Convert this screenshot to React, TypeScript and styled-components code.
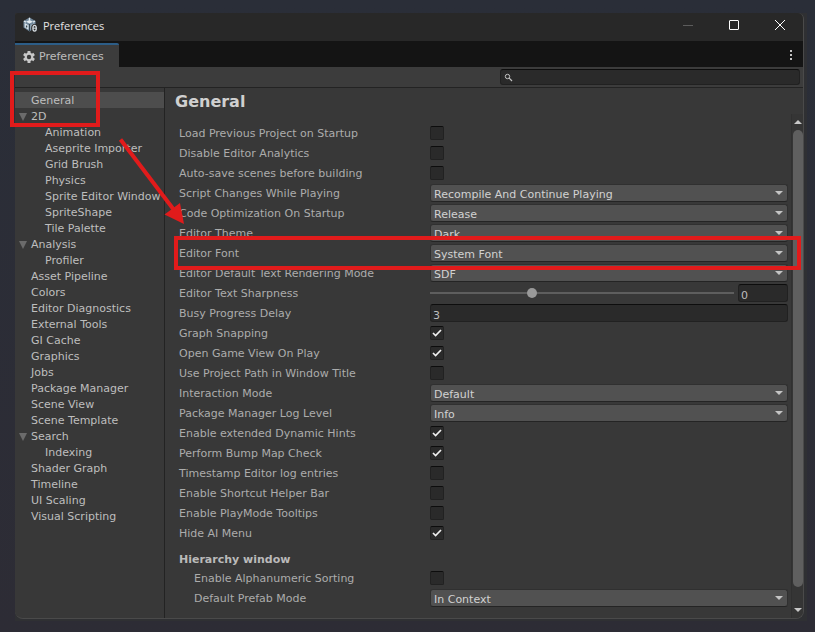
import React from "react";
import styled, { createGlobalStyle, css } from "styled-components";

const uiFont = '"DejaVu Sans", Verdana, sans-serif';

const GlobalStyle = createGlobalStyle`
  *, *::before, *::after { box-sizing: border-box; }
  body { margin: 0; background: #2b2d36; color: #bebebe; font: 11px/16px ${uiFont}; }
  button, input, select { font: inherit; color: inherit; margin: 0; }
  h1, h2, ul { margin: 0; padding: 0; }
`;

const Desktop = styled.div`
  position: relative;
  display: flex;
  min-height: 100vh;
  padding: 13px 8px 11px 15px;
  background: linear-gradient(#2a2e38, #2d2c35);
`;

const Backdrop = styled.div`
  display: flex;
  flex: 1;
  min-width: 0;
  padding: 0 3px 2px 0;
  background: #2f3033;
`;

const Window = styled.div`
  display: flex;
  flex-direction: column;
  flex: 1;
  min-width: 0;
  overflow: hidden;
  background: #383838;
  border: solid #4a4a4a;
  border-width: 0 1px 1px 0;
  border-radius: 3px 6px 8px 8px;
`;

const TitleBar = styled.header`
  display: flex;
  align-items: center;
  height: 28px;
  padding: 0 0 4px 8px;
  background: #282828;
`;

const Title = styled.span`
  flex: 1;
  margin-left: 5px;
  padding-top: 2px;
  font: 11px/16px "Open Sans", "Noto Sans", sans-serif;
  color: #e4e4e4;
`;

const CaptionButton = styled.button<{ $dim?: boolean }>`
  display: grid;
  place-items: center;
  width: 46px;
  height: 24px;
  padding: 0;
  border: 0;
  background: none;
  color: ${(p) => (p.$dim ? "#5c5c5c" : "#ffffff")};
`;

const TabBar = styled.div`
  display: flex;
  align-items: flex-end;
  justify-content: space-between;
  height: 26px;
  background: #141414;
`;

const Tab = styled.button`
  display: flex;
  align-items: center;
  gap: 4px;
  height: 24px;
  padding: 1px 15px 0 8px;
  border: 0;
  border-top: 2px solid #2c5d87;
  border-radius: 0 2px 0 0;
  background: #3c3c3c;
  color: #bdbdbd;
`;

const MenuButton = styled.button`
  display: grid;
  place-items: center;
  width: 24px;
  height: 26px;
  padding: 2px 0 0;
  border: 0;
  background: none;
  color: #c4c4c4;
`;

const Toolbar = styled.div`
  display: flex;
  justify-content: flex-end;
  height: 21px;
  padding: 2px 3px;
  background: #3c3c3c;
  border-bottom: 1px solid #232323;
`;

const field = css`
  background: #2a2a2a;
  border: 1px solid #212121;
  border-top-color: #0d0d0d;
  border-radius: 3px;
`;

const SearchBox = styled.label`
  ${field}
  display: flex;
  align-items: center;
  width: 300px;
  height: 16px;
  padding-left: 3px;
  color: #c4c4c4;
  input {
    flex: 1;
    min-width: 0;
    height: 14px;
    padding: 0 4px;
    border: 0;
    outline: 0;
    background: none;
  }
`;

const Body = styled.div`
  display: flex;
  flex: 1;
  min-height: 0;
`;

const Sidebar = styled.nav`
  flex: 0 0 150px;
  padding-top: 4px;
  border-right: 1px solid #232323;
  ul { list-style: none; }
`;

const NavItem = styled.a<{ $level: number; $selected?: boolean }>`
  display: flex;
  align-items: center;
  height: 16px;
  padding-top: 2px;
  padding-left: ${(p) => (p.$level ? 30 : 4)}px;
  background: ${(p) => (p.$selected ? "#4d4d4d" : "transparent")};
  color: #bebebe;
  text-decoration: none;
  white-space: nowrap;
`;

const Disclosure = styled.span`
  display: flex;
  width: 12px;
  height: 16px;
  align-items: center;
  color: #6b6b6b;
`;

const Main = styled.main`
  flex: 1;
  min-width: 0;
  padding-left: 10px;
`;

const Heading = styled.h1`
  height: 26px;
  padding-top: 2px;
  font-size: 16px;
  line-height: 24px;
  color: #d0d0d0;
`;

const ScrollArea = styled.div`
  display: flex;
  min-height: 504px;
`;

const Settings = styled.div`
  flex: 1;
  min-width: 0;
  padding: 9px 3px 0 4px;
`;

const Row = styled.div<{ $indent?: boolean }>`
  display: flex;
  align-items: center;
  height: 20px;
  > label {
    flex: 0 0 251px;
    padding-top: 2px;
    padding-left: ${(p) => (p.$indent ? 15 : 0)}px;
    color: #acacac;
    white-space: nowrap;
  }
`;

const SectionTitle = styled.h2`
  height: 25px;
  padding-top: 9px;
  font-size: 11px;
  line-height: 16px;
  color: #bababa;
`;

const CheckWrap = styled.span`
  display: grid;
  width: 14px;
  height: 14px;
  > * { grid-area: 1 / 1; }
  svg { pointer-events: none; }
`;

const CheckInput = styled.input`
  ${field}
  appearance: none;
  width: 14px;
  height: 14px;
  border-radius: 2px;
`;

const SelectWrap = styled.span`
  display: grid;
  align-items: center;
  flex: 1;
  min-width: 0;
  > * { grid-area: 1 / 1; }
  svg { justify-self: end; margin-right: 5px; pointer-events: none; color: #c4c4c4; }
`;

const SelectInput = styled.select`
  appearance: none;
  width: 100%;
  height: 18px;
  padding: 2px 16px 0 3px;
  border: 1px solid #303030;
  border-bottom-color: #242424;
  border-radius: 3px;
  background: #515151;
  color: #d2d2d2;
`;

const TextInput = styled.input<{ $narrow?: boolean }>`
  ${field}
  flex: ${(p) => (p.$narrow ? "0 0 50px" : "1")};
  min-width: 0;
  width: 50px;
  height: 18px;
  padding: 4px 2px 0;
  color: #bdbdbd;
`;

const Slider = styled.input`
  appearance: none;
  flex: 1;
  min-width: 0;
  height: 10px;
  margin-right: 4px;
  background: linear-gradient(#5e5e5e, #5e5e5e) center / 100% 2px no-repeat;
  &::-webkit-slider-thumb {
    appearance: none;
    width: 10px;
    height: 10px;
    border-radius: 50%;
    background: #999999;
  }
`;

const ScrollTrack = styled.div`
  display: flex;
  flex-direction: column;
  align-items: center;
  width: 12px;
  background: #353535;
  border-left: 1px solid #303030;
  color: #c8c8c8;
`;

const ScrollButton = styled.button`
  display: grid;
  place-items: center;
  width: 11px;
  height: 16px;
  padding: 0;
  border: 0;
  background: none;
  color: inherit;
`;

const ScrollThumb = styled.div`
  flex: 1;
  width: 10px;
  margin-bottom: 15px;
  border-radius: 5px;
  background: #5f5f5f;
`;

const NavCallout = styled.div`
  position: absolute;
  left: 10px;
  top: 71px;
  width: 90px;
  height: 56px;
  border: 4px solid #e11b1b;
  pointer-events: none;
`;

const FontCallout = styled.div`
  position: absolute;
  left: 174px;
  right: 14px;
  top: 236px;
  height: 34px;
  border: 4px solid #e11b1b;
  pointer-events: none;
`;

const ArrowCallout = styled.svg`
  position: absolute;
  left: 116px;
  top: 136px;
  pointer-events: none;
`;

const Triangle = ({ up }: { up?: boolean }) => (
  <svg width="8" height="4" viewBox="0 0 8 4" aria-hidden="true">
    <path d={up ? "M0 4 4 0l4 4z" : "M0 0h8L4 4z"} fill="currentColor" />
  </svg>
);

const Check = ({ id, checked }: { id: string; checked: boolean }) => {
  const [on, setOn] = React.useState(checked);
  return (
    <CheckWrap>
      <CheckInput id={id} type="checkbox" checked={on} onChange={() => setOn(!on)} />
      {on && (
        <svg width="14" height="14" viewBox="0 0 14 14" aria-hidden="true">
          <path d="M3 7 5.600 9.500 11 4" fill="none" stroke="#eeeeee" strokeWidth="1.7" />
        </svg>
      )}
    </CheckWrap>
  );
};

const Select = ({ id, value }: { id: string; value: string }) => (
  <SelectWrap>
    <SelectInput id={id} defaultValue={value}>
      <option>{value}</option>
    </SelectInput>
    <Triangle />
  </SelectWrap>
);

type Setting = { label: string; value: boolean | string; kind?: "slider" | "text"; indent?: boolean };

const general: Setting[] = [
  { label: "Load Previous Project on Startup", value: false },
  { label: "Disable Editor Analytics", value: false },
  { label: "Auto-save scenes before building", value: false },
  { label: "Script Changes While Playing", value: "Recompile And Continue Playing" },
  { label: "Code Optimization On Startup", value: "Release" },
  { label: "Editor Theme", value: "Dark" },
  { label: "Editor Font", value: "System Font" },
  { label: "Editor Default Text Rendering Mode", value: "SDF" },
  { label: "Editor Text Sharpness", value: "0", kind: "slider" },
  { label: "Busy Progress Delay", value: "3", kind: "text" },
  { label: "Graph Snapping", value: true },
  { label: "Open Game View On Play", value: true },
  { label: "Use Project Path in Window Title", value: false },
  { label: "Interaction Mode", value: "Default" },
  { label: "Package Manager Log Level", value: "Info" },
  { label: "Enable extended Dynamic Hints", value: true },
  { label: "Perform Bump Map Check", value: true },
  { label: "Timestamp Editor log entries", value: false },
  { label: "Enable Shortcut Helper Bar", value: false },
  { label: "Enable PlayMode Tooltips", value: false },
  { label: "Hide AI Menu", value: true },
];

const hierarchy: Setting[] = [
  { label: "Enable Alphanumeric Sorting", value: false, indent: true },
  { label: "Default Prefab Mode", value: "In Context", indent: true },
];

const nav: { label: string; level?: number; open?: boolean }[] = [
  { label: "General" },
  { label: "2D", open: true },
  { label: "Animation", level: 1 },
  { label: "Aseprite Importer", level: 1 },
  { label: "Grid Brush", level: 1 },
  { label: "Physics", level: 1 },
  { label: "Sprite Editor Window", level: 1 },
  { label: "SpriteShape", level: 1 },
  { label: "Tile Palette", level: 1 },
  { label: "Analysis", open: true },
  { label: "Profiler", level: 1 },
  { label: "Asset Pipeline" },
  { label: "Colors" },
  { label: "Editor Diagnostics" },
  { label: "External Tools" },
  { label: "GI Cache" },
  { label: "Graphics" },
  { label: "Jobs" },
  { label: "Package Manager" },
  { label: "Scene View" },
  { label: "Scene Template" },
  { label: "Search", open: true },
  { label: "Indexing", level: 1 },
  { label: "Shader Graph" },
  { label: "Timeline" },
  { label: "UI Scaling" },
  { label: "Visual Scripting" },
];

const SettingRow = ({ label, value, kind, indent }: Setting) => {
  const id = label.toLowerCase().replace(/\s+/g, "-");
  return (
    <Row $indent={indent}>
      <label htmlFor={id}>{label}</label>
      {typeof value === "boolean" ? (
        <Check id={id} checked={value} />
      ) : kind === "slider" ? (
        <>
          <Slider id={id} type="range" min={0} max={100} defaultValue={33} />
          <TextInput $narrow aria-label={`${label} value`} defaultValue={value} />
        </>
      ) : kind === "text" ? (
        <TextInput id={id} defaultValue={value} />
      ) : (
        <Select id={id} value={value} />
      )}
    </Row>
  );
};

const AppLogo = () => (
  <svg width="15" height="16" viewBox="0 0 15 16" aria-hidden="true">
    <path d="M6.5 0.5 12.5 4v6.500l-6 4-6-4V4z" fill="#71889b" />
    <path d="M6.500 3 10 4.800 6.500 6.600 3 4.800z" fill="#e3ebf1" />
    <path d="M6.500 0.800V3M1 4.200l2 1M12 4.200l-2 1" fill="none" stroke="#dbe5ec" strokeWidth="1.300" />
    <path d="M1.700 6v4.200l3.800 2.600V8.200z" fill="#dbe5ec" />
    <path d="M3.600 8.400v2" stroke="#34444f" strokeWidth="1.400" />
    <path d="M7.500 8.200 11 6.200v4L7.500 12.800z" fill="#a9bac7" />
    <path d="M6.500 7v7" stroke="#34444f" strokeWidth="1" />
    <ellipse cx="11.5" cy="11.3" rx="3.300" ry="4.200" fill="#282828" />
    <ellipse cx="11.600" cy="11.300" rx="1.700" ry="2.900" fill="none" stroke="#d7dee3" strokeWidth="1.300" />
    <path d="M10 11.200h3.200" stroke="#d7dee3" strokeWidth="1" />
  </svg>
);

const Gear = () => (
  <svg width="12" height="12" viewBox="0 0 12 12" aria-hidden="true">
    <g fill="#c8c8c8">
      {[0, 60, 120].map((a) => (
        <rect key={a} x="4.500" y="0" width="3" height="12" rx="0.500" transform={`rotate(${a} 6 6)`} />
      ))}
      <circle cx="6" cy="6" r="4.400" />
    </g>
    <circle cx="6" cy="6" r="2.200" fill="#3c3c3c" />
  </svg>
);

export default function App() {
  return (
    <>
      <GlobalStyle />
      <Desktop>
        <Backdrop>
          <Window>
            <TitleBar>
              <AppLogo />
              <Title>Preferences</Title>
              <CaptionButton $dim aria-label="Minimize">
                <svg width="10" height="10"><path d="M0 5.500h10" stroke="currentColor" /></svg>
              </CaptionButton>
              <CaptionButton aria-label="Maximize">
                <svg width="10" height="10"><rect x="0.500" y="0.500" width="9" height="9" rx="0.500" fill="none" stroke="currentColor" /></svg>
              </CaptionButton>
              <CaptionButton aria-label="Close">
                <svg width="10" height="10"><path d="M0 0l10 10M10 0 0 10" stroke="currentColor" /></svg>
              </CaptionButton>
            </TitleBar>
            <TabBar>
              <Tab><Gear />Preferences</Tab>
              <MenuButton aria-label="Tab options">
                <svg width="2" height="10"><path d="M0 0h2v2H0zM0 4h2v2H0zM0 8h2v2H0z" fill="currentColor" /></svg>
              </MenuButton>
            </TabBar>
            <Toolbar>
              <SearchBox>
                <svg width="9" height="9" viewBox="0 0 9 9" aria-hidden="true">
                  <circle cx="3.500" cy="3.500" r="2.200" fill="none" stroke="currentColor" strokeWidth="1" />
                  <path d="M5.200 5.200 8 8" stroke="currentColor" strokeWidth="1.200" />
                </svg>
                <input type="text" aria-label="Search preferences" />
              </SearchBox>
            </Toolbar>
            <Body>
              <Sidebar>
                <ul>
                  {nav.map((item, i) => (
                    <li key={item.label}>
                      <NavItem href="#" $level={item.level ?? 0} $selected={i === 0}>
                        {!item.level && <Disclosure>{item.open && <svg width="8" height="8" aria-hidden="true"><path d="M0 0h8L4 8z" fill="currentColor" /></svg>}</Disclosure>}
                        {item.label}
                      </NavItem>
                    </li>
                  ))}
                </ul>
              </Sidebar>
              <Main>
                <Heading>General</Heading>
                <ScrollArea>
                  <Settings>
                    {general.map((s) => <SettingRow key={s.label} {...s} />)}
                    <SectionTitle>Hierarchy window</SectionTitle>
                    {hierarchy.map((s) => <SettingRow key={s.label} {...s} />)}
                  </Settings>
                  <ScrollTrack>
                    <ScrollButton aria-label="Scroll up"><Triangle up /></ScrollButton>
                    <ScrollThumb />
                    <ScrollButton aria-label="Scroll down"><Triangle /></ScrollButton>
                  </ScrollTrack>
                </ScrollArea>
              </Main>
            </Body>
          </Window>
        </Backdrop>
        <NavCallout />
        <FontCallout />
        <ArrowCallout width="72" height="90" viewBox="0 0 72 90" aria-hidden="true">
          <path d="M4.500 3.500 58 74" stroke="#e11b1b" strokeWidth="4" />
          <path d="M68 88 48.500 78.500 64 67z" fill="#e11b1b" />
        </ArrowCallout>
      </Desktop>
    </>
  );
}
